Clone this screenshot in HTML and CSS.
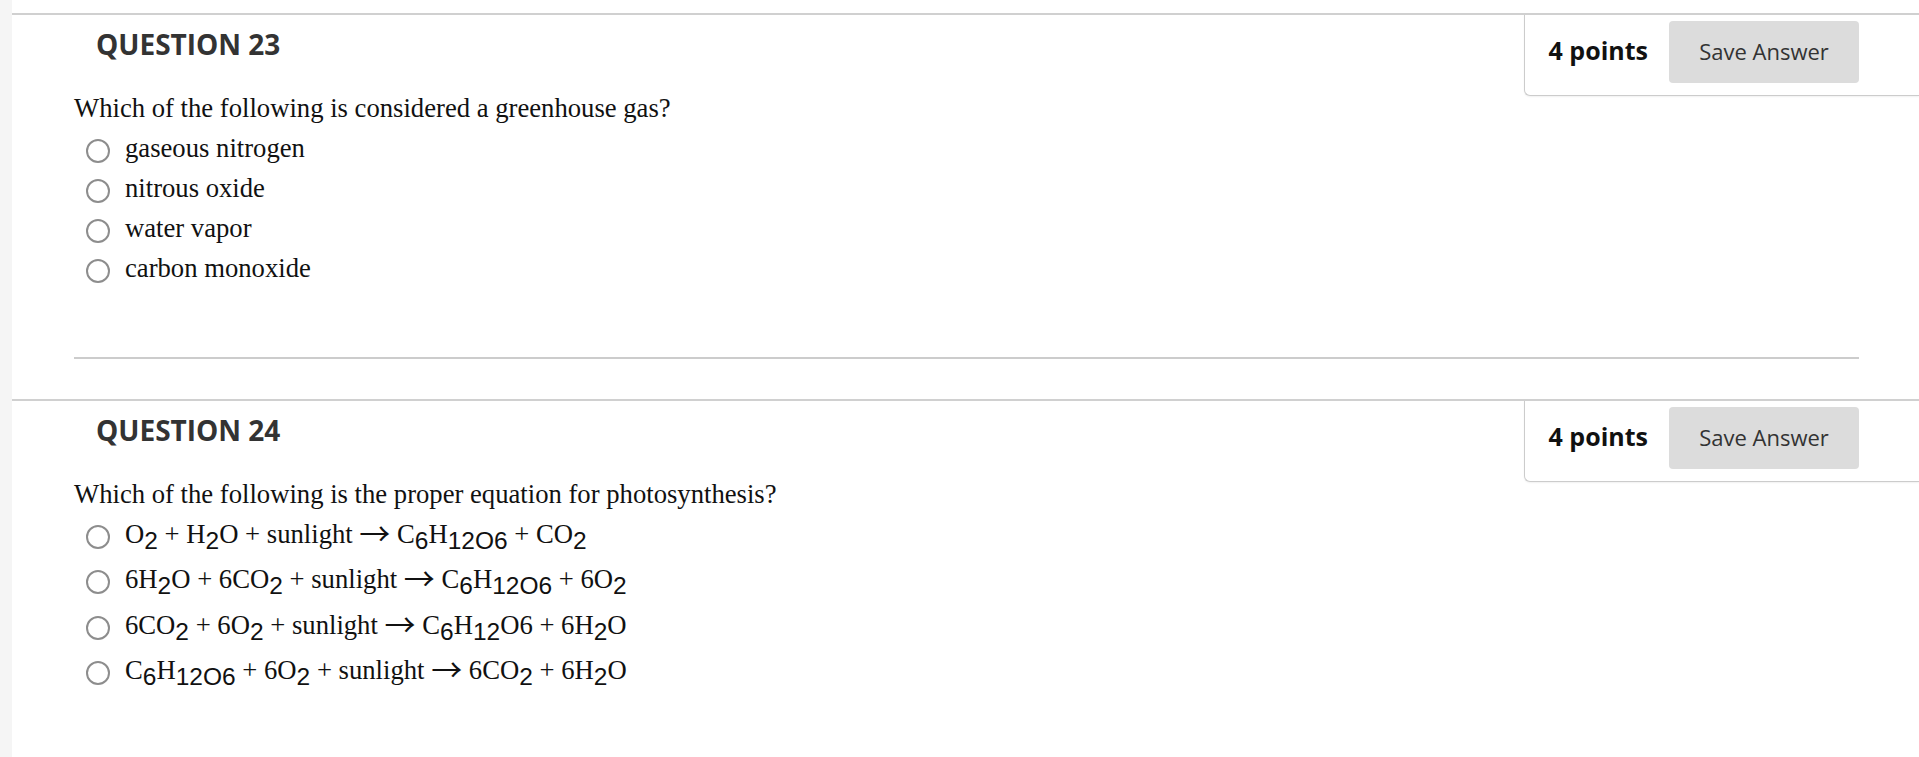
FILE: index.html
```html
<!DOCTYPE html>
<html lang="en">
<head>
<meta charset="utf-8">
<title>Quiz</title>
<link rel="stylesheet" href="styles.css">
</head>
<body>
<div class="page">
  <div class="strip"></div>
  <main class="main">
    <section class="question">
      <div class="q-head">
        <h3 class="q-title">QUESTION 23</h3>
        <div class="q-points">
          <span class="pts">4 points</span>
          <button class="save" type="button">Save Answer</button>
        </div>
      </div>
      <div class="q-body">
        <p class="q-text">Which of the following is considered a greenhouse gas?</p>
        <ul class="options">
          <li><input type="radio" name="q23"><span>gaseous nitrogen</span></li>
          <li><input type="radio" name="q23"><span>nitrous oxide</span></li>
          <li><input type="radio" name="q23"><span>water vapor</span></li>
          <li><input type="radio" name="q23"><span>carbon monoxide</span></li>
        </ul>
        <hr class="q-sep">
      </div>
    </section>
    <section class="question">
      <div class="q-head">
        <h3 class="q-title">QUESTION 24</h3>
        <div class="q-points">
          <span class="pts">4 points</span>
          <button class="save" type="button">Save Answer</button>
        </div>
      </div>
      <div class="q-body">
        <p class="q-text">Which of the following is the proper equation for photosynthesis?</p>
        <ul class="options chem">
          <li><input type="radio" name="q24"><span>O<sub class="ch">2</sub> + H<sub class="ch">2</sub>O + sunlight <span class="arr">→</span> C<sub class="ch">6</sub>H<sub class="ch">12O6</sub> + CO<sub class="ch">2</sub></span></li>
          <li><input type="radio" name="q24"><span>6H<sub class="ch">2</sub>O + 6CO<sub class="ch">2</sub> + sunlight <span class="arr">→</span> C<sub class="ch">6</sub>H<sub class="ch">12O6</sub> + 6O<sub class="ch">2</sub></span></li>
          <li><input type="radio" name="q24"><span>6CO<sub class="ch">2</sub> + 6O<sub class="ch">2</sub> + sunlight <span class="arr">→</span> C<sub class="ch">6</sub>H<sub class="ch">12</sub>O6 + 6H<sub class="ch">2</sub>O</span></li>
          <li><input type="radio" name="q24"><span>C<sub class="ch">6</sub>H<sub class="ch">12O6</sub> + 6O<sub class="ch">2</sub> + sunlight <span class="arr">→</span> 6CO<sub class="ch">2</sub> + 6H<sub class="ch">2</sub>O</span></li>
        </ul>
      </div>
    </section>
  </main>
</div>
</body>
</html>
```

FILE: styles.css
```css
html, body {
  margin: 0;
  padding: 0;
  background: #ffffff;
}
body {
  font-family: "Liberation Serif", "Times New Roman", serif;
  color: #111111;
  overflow: hidden;
}
.page {
  display: flex;
  min-height: 757px;
}
.strip {
  width: 12px;
  flex: none;
  background: #f5f5f5;
}
.main {
  flex: 1;
  min-width: 0;
}
.question {
  border-top: 2px solid #d0d0d0;
  margin-top: 13px;
}
.question + .question {
  margin-top: 40px;
}
.q-head {
  display: flex;
  align-items: flex-start;
}
.q-title {
  margin: 10px 0 0;
  padding-left: 84px;
  font-family: "Open Sans", "Liberation Sans", sans-serif;
  font-weight: 700;
  font-size: 28px;
  line-height: 1.362;
  color: #333333;
}
.q-points {
  margin-left: auto;
  margin-bottom: -8px;
  display: flex;
  align-items: center;
  gap: 21px;
  padding: 6px 60px 12px 24px;
  border-left: 1px solid #cccccc;
  border-bottom: 1px solid #cccccc;
  border-bottom-left-radius: 6px;
  box-shadow: 0 1px 2px rgba(0, 0, 0, 0.06);
  background: #ffffff;
}
.pts {
  font-family: "Open Sans", "Liberation Sans", sans-serif;
  font-weight: 700;
  font-size: 25px;
  color: #111111;
  margin-bottom: 4px;
}
.save {
  width: 190px;
  height: 62px;
  border: 0;
  border-radius: 4px;
  background: #dcdcdc;
  font-family: "Open Sans", "Liberation Sans", sans-serif;
  font-size: 22px;
  color: #333333;
  padding: 0 0 2px;
}
.q-body {
  padding: 0 60px 0 62px;
}
.q-text {
  margin: 0;
  font-size: 26.67px;
  line-height: 40px;
}
.options {
  list-style: none;
  margin: 0;
  padding: 0;
  font-size: 26.67px;
  line-height: 40px;
}
.options input[type="radio"] {
  appearance: none;
  -webkit-appearance: none;
  width: 24px;
  height: 24px;
  margin: 0 15px 0 12px;
  border: 2px solid #8d8d8d;
  border-radius: 50%;
  background: #ffffff;
  vertical-align: -6px;
  box-sizing: border-box;
}
.ch {
  font-family: "Liberation Sans", Arial, sans-serif;
  font-size: 24.5px;
  vertical-align: sub;
  line-height: 37px;
}
.arr {
  font-family: "Noto Sans CJK JP", "DejaVu Sans", sans-serif;
  font-size: 31px;
  font-weight: 400;
  line-height: 0;
  vertical-align: -2px;
}
.q-sep {
  margin: 69px 0 0;
  border: 0;
  height: 2px;
  background: #cccccc;
}
```
